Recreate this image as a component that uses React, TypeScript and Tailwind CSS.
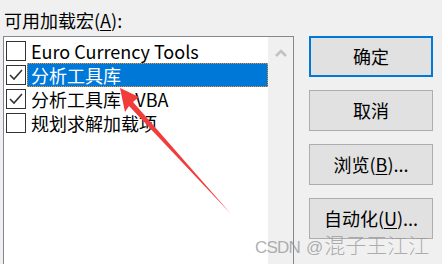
import React from 'react';

interface Addin {
  label: string;
  checked: boolean;
  selected?: boolean;
}

const ADDINS: Addin[] = [
  { label: 'Euro Currency Tools', checked: false },
  { label: '分析工具库', checked: true, selected: true },
  { label: '分析工具库 - VBA', checked: true },
  { label: '规划求解加载项', checked: false },
];

const FONT = "font-['Segoe_UI','Noto_Sans_CJK_SC',sans-serif]";

const CheckBox: React.FC<{ checked: boolean }> = ({ checked }) => (
  <div className="w-5 h-5 shrink-0 border border-[#333333] bg-white flex items-center justify-center">
    {checked && (
      <svg width="16" height="16" viewBox="0 0 16 16">
        <polyline points="2,8 6,12 14,3" fill="none" stroke="#333333" strokeWidth="1.6" />
      </svg>
    )}
  </div>
);

const DialogButton: React.FC<{ children: React.ReactNode; primary?: boolean }> = ({ children, primary }) => (
  <div
    className={`w-[124px] h-[41px] bg-[#e1e1e1] flex items-center justify-center text-[18px] text-black ${
      primary ? 'border-2 border-[#0078d7]' : 'border border-[#adadad]'
    }`}
  >
    {children}
  </div>
);

const App: React.FC = () => {
  return (
    <div className={`relative w-[442px] h-[264px] bg-[#f0f0f0] overflow-hidden ${FONT}`}>
      {/* Label */}
      <div className="pl-[4px] pt-[8px] h-[36px] text-[18px] leading-[24px] text-black">
        可用加载宏(<span className="underline underline-offset-2">A</span>):
      </div>

      <div className="flex">
        {/* List box */}
        <div className="ml-[3px] w-[291px] h-[240px] border border-[#828790] bg-white flex">
          <div className="flex-1 pt-[2px] pl-[2px]">
            {ADDINS.map((a) => (
              <div key={a.label} className="h-[24px] flex items-center">
                <CheckBox checked={a.checked} />
                <div
                  className={`ml-[1px] flex-1 h-[24px] pl-[4px] flex items-center text-[18px] whitespace-nowrap ${
                    a.selected ? 'bg-[#0078d7] text-white outline-1 outline-dotted outline-[#f7931e] -outline-offset-1' : 'text-black'
                  }`}
                >
                  {a.label}
                </div>
              </div>
            ))}
          </div>
          {/* Scrollbar */}
          <div className="w-[25px] bg-[#f0f0f0] flex justify-center pt-[12px]">
            <svg width="12" height="8" viewBox="0 0 12 8">
              <polyline points="1,7 6,2 11,7" fill="none" stroke="#c2c2c2" strokeWidth="2.5" />
            </svg>
          </div>
        </div>

        {/* Buttons */}
        <div className="ml-[15px] flex flex-col gap-[13px]">
          <DialogButton primary>确定</DialogButton>
          <DialogButton>取消</DialogButton>
          <DialogButton>
            浏览(<span className="underline underline-offset-2">B</span>)...
          </DialogButton>
          <DialogButton>
            自动化(<span className="underline underline-offset-2">U</span>)...
          </DialogButton>
        </div>
      </div>

      {/* Annotation arrow */}
      <svg className="absolute left-0 top-0 pointer-events-none" width="442" height="264" viewBox="0 0 442 264">
        <polygon points="120,88 139,97 133,102 231,214 129,106 125,112" fill="#f23c3c" />
      </svg>

      {/* Watermark */}
      <div className="absolute left-[255px] top-[234px] flex items-baseline leading-[24px] text-[#9a9a9a]/80 font-['Liberation_Sans','Noto_Sans_CJK_SC',sans-serif] whitespace-nowrap">
        <span className="text-[17px] tracking-[-0.8px]">CSDN</span>
        <span className="ml-[6px] text-[17px]">@</span>
        <span className="ml-[1px] text-[21px] font-light">混子王江江</span>
      </div>
    </div>
  );
};

export default App;
